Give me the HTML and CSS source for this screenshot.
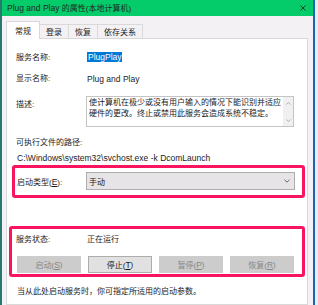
FILE: index.html
```html
<!DOCTYPE html>
<html>
<head>
<meta charset="utf-8">
<link rel="stylesheet" href="styles.css">
</head>
<body>
<div class="desk">
  <div class="window">
    <div class="titlebar">
      <span class="title"><span class="en">Plug and Play </span>的属性(本地计算机)</span>
      <svg class="close" width="6" height="6" viewBox="0 0 6 6"><path d="M0.5 0.5L5.5 5.5M5.5 0.5L0.5 5.5" stroke="#1d3a2c" stroke-width="1"/></svg>
    </div>
    <div class="main">
      <div class="tabs">
        <div class="tab active">常规</div>
        <div class="tab">登录</div>
        <div class="tab">恢复</div>
        <div class="tab">依存关系</div>
      </div>
      <div class="panel">
        <div class="row r1"><div class="label">服务名称:</div><div class="value"><span class="sel en">PlugPlay</span></div></div>
        <div class="row r2"><div class="label">显示名称:</div><div class="value en">Plug and Play</div></div>
        <div class="row r3">
          <div class="label lbl-desc">描述:</div>
          <div class="desc-box">
            <div class="desc-text">使计算机在极少或没有用户输入的情况下能识别并适应<br>硬件的更改。终止或禁用此服务会造成系统不稳定。</div>
            <div class="scroll">
              <svg width="5" height="3" viewBox="0 0 5 3"><path d="M0.5 2.5L2.5 0.5L4.5 2.5" fill="none" stroke="#a6a6a6" stroke-width="0.9"/></svg>
              <svg width="5" height="3" viewBox="0 0 5 3"><path d="M0.5 0.5L2.5 2.5L4.5 0.5" fill="none" stroke="#a6a6a6" stroke-width="0.9"/></svg>
            </div>
          </div>
        </div>
        <div class="line r4">可执行文件的路径:</div>
        <div class="line r5 en">C:\Windows\system32\svchost.exe -k DcomLaunch</div>
        <div class="row r6">
          <div class="label">启动类型(<u class="en">E</u>):</div>
          <div class="select"><span>手动</span>
            <svg width="6" height="4" viewBox="0 0 6 4"><path d="M0.5 0.8L3 3.2L5.5 0.8" fill="none" stroke="#555" stroke-width="0.9"/></svg>
          </div>
        </div>
        <div class="row r7"><div class="label">服务状态:</div><div class="value">正在运行</div></div>
        <div class="buttons">
          <div class="btn off">启动(<u class="en">S</u>)</div>
          <div class="btn on">停止(<u class="en">T</u>)</div>
          <div class="btn off">暂停(<u class="en">P</u>)</div>
          <div class="btn off">恢复(<u class="en">R</u>)</div>
        </div>
        <div class="line r8">当从此处启动服务时，你可指定所适用的启动参数。</div>
        <div class="mark mark1"></div>
        <div class="mark mark2"></div>
      </div>
    </div>
  </div>
  <div class="edge"></div>
</div>
</body>
</html>
```

FILE: styles.css
```css
html, body {
  margin: 0;
  height: 305px;
  overflow: hidden;
}
body {
  font-family: "Liberation Sans", "Noto Sans CJK SC", sans-serif;
  font-size: 8px;
  color: #1b1b1b;
  background: #e8eef8;
}
.en {
  font-size: 8.5px;
}
.desk {
  display: flex;
  height: 305px;
}
.window {
  width: 311px;
  border-left: 2px solid #267a6d;
  background: #f4f1f4;
  display: flex;
  flex-direction: column;
}
.edge {
  width: 2px;
  background: #1b62b8;
}
.titlebar {
  height: 16px;
  flex: none;
  background: #05cc6a;
  display: flex;
  align-items: center;
  justify-content: space-between;
  padding: 0 7px 1px 5px;
  box-sizing: border-box;
  color: #1f2a24;
}
.close {
  display: block;
}
.main {
  flex: 1;
  display: flex;
  flex-direction: column;
}
.tabs {
  height: 22px;
  flex: none;
  display: flex;
  align-items: flex-end;
  padding-left: 4px;
}
.tab {
  height: 13px;
  border: 1px solid #d9d9d9;
  border-bottom: none;
  border-left: none;
  padding: 0 6px;
  display: flex;
  align-items: center;
  background: #f4f1f4;
}
.tab.active {
  height: 16px;
  border-left: 1px solid #d9d9d9;
  background: #fff;
  padding: 0 8px 1px;
  margin-bottom: -1px;
  position: relative;
  z-index: 1;
}
.panel {
  flex: 1;
  margin-left: 4px;
  width: 302px;
  box-sizing: border-box;
  background: #fff;
  border: 1px solid #d9d9d9;
  padding: 13px 12px 0 9px;
  position: relative;
}
.row {
  display: flex;
  align-items: center;
}
.label {
  width: 70px;
  flex: none;
}
.value {
  padding-left: 1px;
}
.r1 {
  height: 12px;
  line-height: 12px;
}
.sel {
  display: inline-block;
  line-height: 10px;
  padding: 0 0 0 1px;
  background: #0078d7;
  color: #fff;
}
.r2 {
  margin-top: 9px;
  height: 12px;
  line-height: 12px;
}
.r3 {
  margin-top: 11px;
  align-items: flex-start;
}
.lbl-desc {
  padding-top: 3px;
  line-height: 12px;
}
.desc-box {
  width: 208px;
  height: 31px;
  box-sizing: border-box;
  border: 1px solid #c4c4c4;
  background: #fff;
  display: flex;
}
.desc-text {
  flex: 1;
  padding: 0 2px;
  line-height: 11px;
  white-space: nowrap;
  overflow: hidden;
}
.scroll {
  width: 10px;
  flex: none;
  background: #f0f0f0;
  display: flex;
  flex-direction: column;
  justify-content: space-between;
  align-items: center;
  padding: 5px 0 4px;
  box-sizing: border-box;
}
.scroll svg {
  display: block;
}
.line {
  line-height: 12px;
  height: 12px;
  white-space: nowrap;
}
.r4 {
  margin-top: 10px;
}
.r5 {
  margin-top: 3px;
  padding-left: 1px;
}
.r6 {
  margin-top: 8px;
}
.r6 .label {
  padding-left: 1px;
  width: 69px;
}
.select {
  width: 209px;
  height: 18px;
  box-sizing: border-box;
  border: 1px solid #adadad;
  background: #e6e4e6;
  display: flex;
  align-items: center;
  justify-content: space-between;
  padding: 0 4px 0 2px;
}
.select svg {
  display: block;
}
.r7 {
  margin-top: 44px;
  height: 12px;
  line-height: 12px;
}
.buttons {
  margin-top: 10px;
  margin-left: 1px;
  display: grid;
  grid-template-columns: repeat(4, 64px);
  column-gap: 7px;
}
.btn {
  height: 17px;
  box-sizing: border-box;
  display: flex;
  align-items: center;
  justify-content: center;
  border: 1px solid #cccccc;
}
.btn.off {
  background: #cccccc;
  color: #878787;
}
.btn.on {
  background: #e1e1e1;
  border-color: #adadad;
}
.r8 {
  margin-top: 13px;
  padding-left: 1px;
}
.mark {
  position: absolute;
  border: 3px solid #f8145f;
  border-radius: 3px;
  box-sizing: border-box;
}
.mark1 {
  left: 5px;
  top: 126px;
  width: 293px;
  height: 33px;
}
.mark2 {
  left: 2px;
  top: 187px;
  width: 296px;
  height: 51px;
}
```
